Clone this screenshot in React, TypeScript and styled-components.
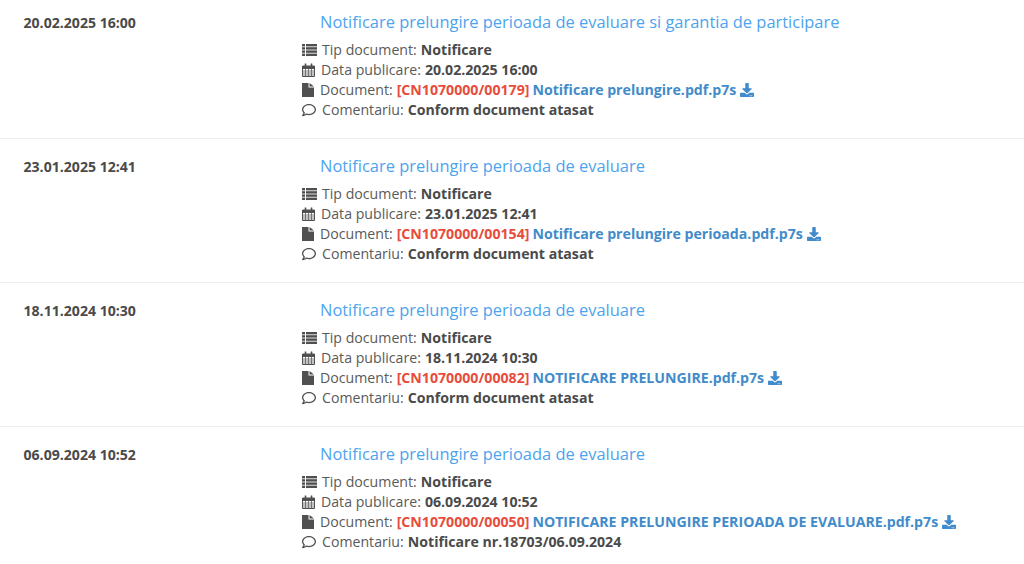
import React from 'react';
import styled, { createGlobalStyle } from 'styled-components';
import { FaRegComment, FaDownload } from 'react-icons/fa';

const GlobalStyle = createGlobalStyle`
  html, body {
    margin: 0;
    padding: 0;
    background: #fff;
    overflow: hidden;
  }
  body {
    font-family: "Open Sans", sans-serif;
    font-size: 14.15px;
    line-height: 20px;
    color: #5a5a5a;
  }
`;

const List = styled.div`
  display: flex;
  flex-direction: column;
`;

const Row = styled.div`
  display: grid;
  grid-template-columns: 278.5px 1fr;
  padding: 17px 0 18px 23.5px;
  border-bottom: 1px solid #f0f0ec;
  &:first-child {
    padding-top: 12px;
  }
  &:last-child {
    border-bottom: none;
  }
`;

const DateCell = styled.div`
  font-weight: 700;
  font-size: 14.1px;
  line-height: 22px;
  color: #4a4a4a;
`;

const Title = styled.a`
  display: block;
  margin: 0 0 8px 18px;
  font-size: 16.45px;
  line-height: 20px;
  color: #4da3ee;
`;

const Meta = styled.div`
  display: flex;
  align-items: center;
  height: 20px;
  white-space: nowrap;
  svg {
    flex: none;
    color: #505050;
  }
`;

const IconBox = styled.span<{ $w: number }>`
  display: inline-flex;
  align-items: center;
  width: ${({ $w }) => $w}px;
  flex: none;
`;

const Value = styled.b`
  font-weight: 700;
  color: #4a4a4a;
  margin-left: 4px;
`;

const Code = styled.b`
  font-weight: 700;
  color: #e74c3c;
  margin-left: 4px;
`;

const FileLink = styled.a`
  display: inline-flex;
  align-items: center;
  font-weight: 700;
  color: #428bca;
  margin-left: 3px;
  svg {
    color: #428bca;
    margin-left: 4px;
  }
`;

const ListIcon = () => (
  <svg width="15" height="12" viewBox="0 0 15 12" fill="currentColor">
    <rect x="0" y="0" width="3" height="2.4" />
    <rect x="4" y="0" width="11" height="2.4" />
    <rect x="0" y="3.2" width="3" height="2.4" />
    <rect x="4" y="3.2" width="11" height="2.4" />
    <rect x="0" y="6.4" width="3" height="2.4" />
    <rect x="4" y="6.4" width="11" height="2.4" />
    <rect x="0" y="9.6" width="3" height="2.4" />
    <rect x="4" y="9.6" width="11" height="2.4" />
  </svg>
);

const CalendarIcon = () => (
  <svg width="13" height="14" viewBox="0 0 13 14" fill="none" stroke="currentColor">
    <path d="M.5 3.5h12v10H.5z" strokeWidth="1" />
    <path d="M.5 3h12v2.5H.5z" fill="currentColor" strokeWidth="1" />
    <path d="M3.5 0.5v3M9.5 0.5v3" strokeWidth="1.6" />
    <path d="M3.5 6v7.5M6.5 6v7.5M9.5 6v7.5M1 8h11M1 10h11M1 12h11" strokeWidth=".7" />
  </svg>
);

const FileIcon = () => (
  <svg width="12" height="14" viewBox="0 0 12 14" fill="currentColor">
    <path d="M0 0h6.5v4.5H12V14H0z" />
    <path d="M7.5 0 12 3.5H7.5z" />
  </svg>
);

type Doc = {
  date: string;
  title: string;
  code: string;
  file: string;
  comment: string;
};

const docs: Doc[] = [
  {
    date: '20.02.2025 16:00',
    title: 'Notificare prelungire perioada de evaluare si garantia de participare',
    code: '[CN1070000/00179]',
    file: 'Notificare prelungire.pdf.p7s',
    comment: 'Conform document atasat',
  },
  {
    date: '23.01.2025 12:41',
    title: 'Notificare prelungire perioada de evaluare',
    code: '[CN1070000/00154]',
    file: 'Notificare prelungire perioada.pdf.p7s',
    comment: 'Conform document atasat',
  },
  {
    date: '18.11.2024 10:30',
    title: 'Notificare prelungire perioada de evaluare',
    code: '[CN1070000/00082]',
    file: 'NOTIFICARE PRELUNGIRE.pdf.p7s',
    comment: 'Conform document atasat',
  },
  {
    date: '06.09.2024 10:52',
    title: 'Notificare prelungire perioada de evaluare',
    code: '[CN1070000/00050]',
    file: 'NOTIFICARE PRELUNGIRE PERIOADA DE EVALUARE.pdf.p7s',
    comment: 'Notificare nr.18703/06.09.2024',
  },
];

export default function App() {
  return (
    <>
      <GlobalStyle />
      <List>
        {docs.map((doc) => (
          <Row key={doc.date}>
            <DateCell>{doc.date}</DateCell>
            <div>
              <Title>{doc.title}</Title>
              <Meta>
                <IconBox $w={20}><ListIcon /></IconBox>
                Tip document:<Value>Notificare</Value>
              </Meta>
              <Meta>
                <IconBox $w={19}><CalendarIcon /></IconBox>
                Data publicare:<Value>{doc.date}</Value>
              </Meta>
              <Meta>
                <IconBox $w={18}><FileIcon /></IconBox>
                Document:<Code>{doc.code}</Code>
                <FileLink>{doc.file}<FaDownload size={14} /></FileLink>
              </Meta>
              <Meta>
                <IconBox $w={20}><FaRegComment size={14} /></IconBox>
                Comentariu:<Value>{doc.comment}</Value>
              </Meta>
            </div>
          </Row>
        ))}
      </List>
    </>
  );
}
